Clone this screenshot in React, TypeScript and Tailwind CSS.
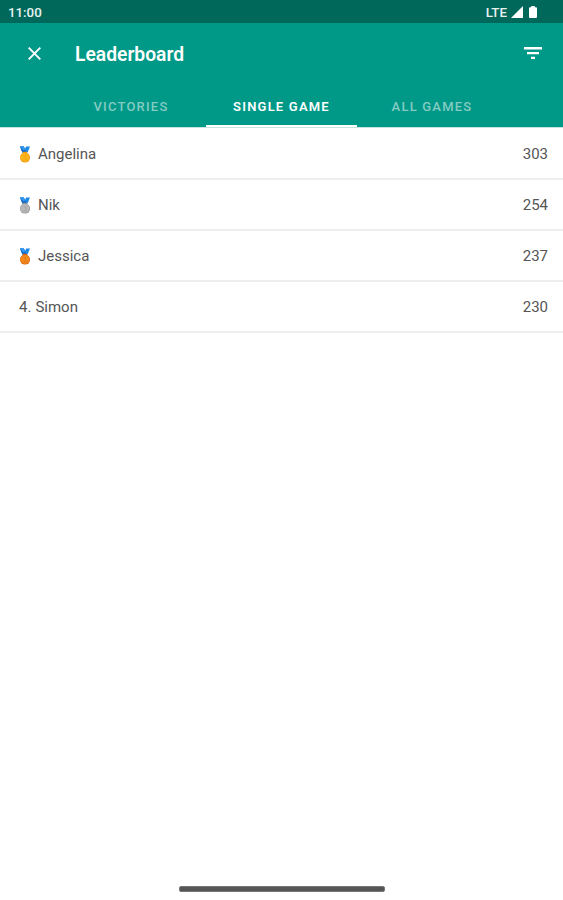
import { useState } from 'react';
import clsx from 'clsx';

type Player = {
  name: string;
  score: number;
};

const tabs = ['Victories', 'Single game', 'All games'];

const players: Player[] = [
  { name: 'Angelina', score: 303 },
  { name: 'Nik', score: 254 },
  { name: 'Jessica', score: 237 },
  { name: 'Simon', score: 230 },
];

const medals = [
  { fill: '#fbb41c', shade: '#f39a12' },
  { fill: '#b9b9b9', shade: '#929292' },
  { fill: '#f28a1e', shade: '#d9600f' },
];

function StatusBar() {
  return (
    <div className="flex h-[23px] items-center bg-[#00675b] pl-2 pr-[26px] pt-[2px] text-[13.3px] font-medium text-[#e8f3f1]">
      <span>11:00</span>
      <div className="ml-auto flex items-center">
        <span>LTE</span>
        <svg className="mb-[2px] ml-[4px] h-3 w-3" viewBox="0 0 12 12" fill="white">
          <path d="M12 0v12H0z" />
        </svg>
        <svg className="mb-[2px] ml-[6px] h-3 w-2" viewBox="0 0 8 12" fill="white">
          <path d="M2.2 0h3.6v1.2H7Q8 1.2 8 2.2V11q0 1-1 1H1q-1 0-1-1V2.2q0-1 1-1h1.2z" />
        </svg>
      </div>
    </div>
  );
}

function Medal({ fill, shade }: { fill: string; shade: string }) {
  return (
    <svg className="mr-[7px] h-[17px] w-3" viewBox="0 0 12 17">
      <path d="M1 .5h3.8L6 3 7.2.5H11L8.6 6.6H3.4z" fill="#1e88e5" />
      <path d="M1 .5h3.8L7 5.4l-.6 1.2h-3z" fill="#1565c0" />
      <path d="M1 .5h3.8L6 3 5 5z" fill="#2f9bf5" />
      <rect x="4" y="5.8" width="4" height="1.8" fill={shade} />
      <circle cx="6" cy="11.6" r="5" fill={shade} />
      <circle cx="5.8" cy="11.3" r="4.4" fill={fill} />
      <path d="M4.4 9.7h2.3v4M4.4 13.7h3.4" fill="none" stroke={shade} strokeWidth=".5" />
    </svg>
  );
}

export default function App() {
  const [activeTab, setActiveTab] = useState<number>(1);

  return (
    <div className="flex h-[900px] w-[563px] flex-col bg-white font-[Roboto,sans-serif]">
      <StatusBar />
      <header className="bg-[#009887] text-white">
        <div className="flex h-[61px] items-center pl-[28px] pr-[21px]">
          <button aria-label="Close">
            <svg className="h-[13px] w-[13px]" viewBox="0 0 13 13" stroke="currentColor" strokeWidth="1.9">
              <path d="M.7.7l11.6 11.6M12.3.7L.7 12.3" />
            </svg>
          </button>
          <h1 className="ml-[34px] pt-[4px] text-[19.3px] font-semibold">Leaderboard</h1>
          <button className="ml-auto pb-px" aria-label="Filter">
            <svg className="h-3 w-[18px]" viewBox="0 0 18 12" fill="currentColor">
              <path d="M0 0h18v2.5H0zM3 5h12v2.3H3zM7 9.8h4V12H7z" />
            </svg>
          </button>
        </div>
        <nav className="flex h-[43px] justify-center">
          {tabs.map((tab, i) => (
            <button
              key={tab}
              onClick={() => setActiveTab(i)}
              className={clsx(
                'w-[150.5px] border-b-2 pt-[4px] text-[13px] uppercase tracking-[1.2px]',
                i === activeTab
                  ? 'border-white font-semibold text-white'
                  : 'border-transparent font-medium text-[#84cbc3]'
              )}
            >
              {tab}
            </button>
          ))}
        </nav>
      </header>
      <div className="h-px bg-[#c5e3df]" />
      <ul className="pt-px">
        {players.map((player, i) => (
          <li
            key={player.name}
            className="flex h-[51px] items-center border-b-2 border-[#eee] pl-[19px] pr-[15px] pt-px text-[15px] text-[#555]"
          >
            {medals[i] ? <Medal {...medals[i]} /> : <span className="mr-1">{i + 1}.</span>}
            <span>{player.name}</span>
            <span className="ml-auto">{player.score}</span>
          </li>
        ))}
      </ul>
      <div className="mx-auto mb-[8px] mt-auto h-[6px] w-[206px] rounded-[2px] border border-[#777] bg-[#555]" />
    </div>
  );
}
